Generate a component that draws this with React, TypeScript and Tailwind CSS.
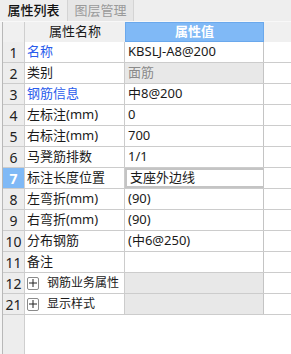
type Row = {
  no: string;
  name: string;
  value: string;
  blue?: boolean;
  readonly?: boolean;
  group?: boolean;
  selected?: boolean;
};

const rows: Row[] = [
  { no: "1", name: "名称", value: "KBSLJ-A8@200", blue: true },
  { no: "2", name: "类别", value: "面筋", readonly: true },
  { no: "3", name: "钢筋信息", value: "中8@200", blue: true },
  { no: "4", name: "左标注(mm)", value: "0" },
  { no: "5", name: "右标注(mm)", value: "700" },
  { no: "6", name: "马凳筋排数", value: "1/1" },
  { no: "7", name: "标注长度位置", value: "支座外边线", selected: true },
  { no: "8", name: "左弯折(mm)", value: "(90)" },
  { no: "9", name: "右弯折(mm)", value: "(90)" },
  { no: "10", name: "分布钢筋", value: "(中6@250)" },
  { no: "11", name: "备注", value: "" },
  { no: "12", name: "钢筋业务属性", value: "", group: true },
  { no: "21", name: "显示样式", value: "", group: true },
];

function PlusBox() {
  return (
    <span className="flex shrink-0 items-center justify-center w-[12px] h-[13px] mr-[8px] border border-[#8a8a8a] rounded-[2px] bg-white">
      <svg width="8" height="8" viewBox="0 0 8 8">
        <path d="M0 4h8M4 0v8" stroke="#222" strokeWidth="1" />
      </svg>
    </span>
  );
}

export default function App() {
  return (
    <div
      className="w-[291px] h-[354px] bg-white flex flex-col overflow-hidden text-[13px] text-[#1a1a1a]"
      style={{ fontFamily: '"Noto Sans", "Noto Sans CJK SC", sans-serif' }}
    >
      {/* Tabs */}
      <div className="h-[22px] shrink-0 flex bg-[#eeeeee] border-b border-[#f8f8f8]">
        <div className="w-[68px] flex items-center justify-center font-medium text-[#111] border-r border-[#d4d4d4]">
          属性列表
        </div>
        <div className="w-[66px] flex items-center justify-center text-[#9a9a9a] border-r border-[#d4d4d4] bg-[#e6e6e6]">
          图层管理
        </div>
      </div>

      {/* Body */}
      <div className="flex-1 flex">
        <div className="w-[3px] bg-[#f4f4f4] border-r border-[#b8b8b8]" />
        <div className="flex-1 flex flex-col relative">
          {/* gutter fill below table */}
          <div className="absolute left-0 top-0 bottom-0 w-[22px] bg-[#ededed] border-r border-[#cfcfcf]" />

          {/* Header */}
          <div className="relative flex shrink-0 h-[20px] bg-[#f0f0f0]">
            <div className="w-[22px] border-r border-[#cfcfcf]" />
            <div className="w-[100px] flex items-center justify-center text-[#1a1a1a]">属性名称</div>
            <div className="w-[139px] flex items-center justify-center bg-[#80b9f6] border border-[#6aa8ec] text-white font-bold">
              属性值
            </div>
          </div>

          {rows.map((r) => (
            <div key={r.no} className="relative flex shrink-0 h-[21px] border-b border-[#cccccc] whitespace-nowrap">
              <div
                className={
                  "w-[22px] shrink-0 flex items-center justify-center border-r border-[#cfcfcf] text-[14px] " +
                  (r.selected ? "bg-[#7fb9f6] text-white font-bold" : "bg-[#ededed] text-[#222]")
                }
              >
                {r.no}
              </div>
              <div
                className={
                  "w-[100px] shrink-0 flex items-center pl-[2px] bg-white border-r border-[#cccccc] overflow-visible " +
                  (r.blue ? "text-[#2a5cec]" : "text-[#1a1a1a]")
                }
              >
                {r.group && <PlusBox />}
                <span className={r.group ? "text-[12px]" : ""}>{r.name}</span>
              </div>
              <div
                className={
                  "w-[139px] shrink-0 flex items-center pl-[3px] border-r border-[#c4c4c4] " +
                  (r.readonly || r.group ? "bg-[#e8e8e8] text-[#8a8a8a] " : "bg-white ") +
                  (r.selected ? "border-2 border-[#7a7a7a] pl-[2px]" : "")
                }
              >
                {r.value}
              </div>
            </div>
          ))}
        </div>
      </div>
    </div>
  );
}
